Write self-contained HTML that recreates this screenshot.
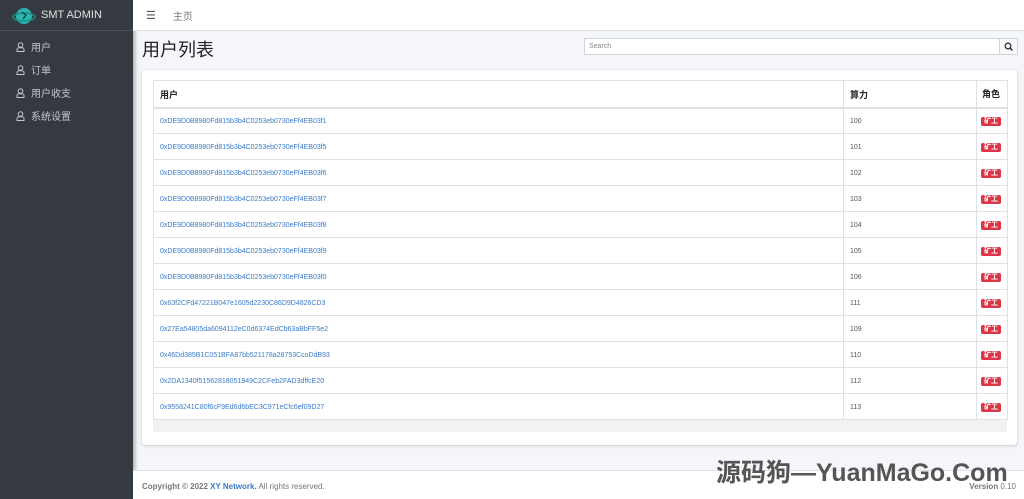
<!DOCTYPE html>
<html><head><meta charset="utf-8"><style>
*{box-sizing:border-box;margin:0;padding:0}
html,body{width:1024px;height:499px;overflow:hidden}
body{font-family:"Liberation Sans","Noto Sans CJK SC",sans-serif;background:#f4f6f9;position:relative}
.sb{position:absolute;left:0;top:0;width:133px;height:499px;background:#343a40;box-shadow:2px 0 4px rgba(0,0,0,.3)}
.brand{height:31px;border-bottom:1px solid #4b545c;display:flex;align-items:center;padding-left:12px;color:#e0e0e0;font-size:11px}
.logo{width:22px;height:18px;margin-right:7px;position:relative}
.nav{padding-top:4px}
.nav div{height:23px;display:flex;align-items:center;padding-left:16px;color:#c2c7d0;font-size:10px}
.nav svg{margin-right:6px}
.hdr{position:absolute;left:133px;top:0;right:0;height:31px;background:#fff;border-bottom:1px solid #dee2e6;font-size:10px;color:#777;display:flex;align-items:center}
h1{position:absolute;left:142px;top:36px;font-size:18px;font-weight:400;color:#222}
.srch{position:absolute;left:584px;top:38px;width:416px;height:17px;border:1px solid #ced4da;background:#fff;font-size:7px;color:#888;padding:4px 4px}
.sbtn{position:absolute;left:999px;top:38px;width:19px;height:17px;border:1px solid #ced4da;background:#f8f9fa}
.card{position:absolute;left:142px;top:70px;width:875px;height:375px;background:#fff;border-radius:3px;box-shadow:0 0 1px rgba(0,0,0,.2),0 1px 3px rgba(0,0,0,.15)}
.tw{position:absolute;left:11px;top:10px;width:854px;height:352px;background:#f2f2f2}
table{border-collapse:collapse;width:854px;background:#fff;table-layout:fixed}
td,th{border:1px solid #dee2e6;font-size:7px;height:26px;padding:2px 6px 0;text-align:left;color:#555;white-space:nowrap;overflow:hidden;vertical-align:middle;line-height:10px}
th{height:27px;font-size:9px;color:#222;font-weight:700;border-bottom:2px solid #dee2e6}
td a{color:#3a7bc8}
.b{background:#dc3545;color:#fff;font-size:7px;padding:1px 3px;border-radius:2px;font-weight:700;white-space:nowrap}
.ft{position:absolute;left:133px;top:470px;right:0;height:29px;background:#fff;border-top:1px solid #dee2e6;font-size:8px;color:#777;padding:11px 9px}
.wm{position:absolute;left:716px;top:458px;font-size:25px;font-weight:700;color:#555;white-space:nowrap;line-height:30px}
</style></head><body>
<div class="sb">
<div class="brand"><div class="logo"><svg width="24" height="20"><circle cx="12" cy="10" r="8" fill="#2bb5b0"/><ellipse cx="12" cy="11" rx="11" ry="4" fill="none" stroke="#1c8f8b" stroke-width="1.5"/><path d="M10 6l4 3-3 4" stroke="#0d4f5a" stroke-width="1.5" fill="none"/></svg></div>SMT ADMIN</div>
<div class="nav">
<div><svg width="9" height="10"><circle cx="4.5" cy="3" r="2.3" fill="none" stroke="#c2c7d0"/><path d="M1 9.5v-2c0-1 1-1.7 2-1.7h3c1 0 2 .7 2 1.7v2z" fill="none" stroke="#c2c7d0"/></svg>用户</div>
<div><svg width="9" height="10"><circle cx="4.5" cy="3" r="2.3" fill="none" stroke="#c2c7d0"/><path d="M1 9.5v-2c0-1 1-1.7 2-1.7h3c1 0 2 .7 2 1.7v2z" fill="none" stroke="#c2c7d0"/></svg>订单</div>
<div><svg width="9" height="10"><circle cx="4.5" cy="3" r="2.3" fill="none" stroke="#c2c7d0"/><path d="M1 9.5v-2c0-1 1-1.7 2-1.7h3c1 0 2 .7 2 1.7v2z" fill="none" stroke="#c2c7d0"/></svg>用户收支</div>
<div><svg width="9" height="10"><circle cx="4.5" cy="3" r="2.3" fill="none" stroke="#c2c7d0"/><path d="M1 9.5v-2c0-1 1-1.7 2-1.7h3c1 0 2 .7 2 1.7v2z" fill="none" stroke="#c2c7d0"/></svg>系统设置</div>
</div></div>
<div class="hdr"><span style="margin-left:13px;font-size:11px;color:#555">☰</span><span style="margin-left:17px">主页</span></div>
<h1>用户列表</h1>
<div class="srch">Search</div>
<div class="sbtn"><svg width="17" height="15"><circle cx="8" cy="7" r="2.8" fill="none" stroke="#333" stroke-width="1.3"/><path d="M10 9l2.5 2.5" stroke="#333" stroke-width="1.5"/></svg></div>
<div class="card"><div class="tw"><table>
<colgroup><col style="width:690px"><col style="width:133px"><col style="width:31px"></colgroup>
<tr><th>用户</th><th>算力</th><th style="padding:0 5px">角色</th></tr>
<tr><td><a>0xDE9D0B8980Fd815b3b4C0253eb0730eFf4EB03f1</a></td><td>100</td><td style="padding:2px 4px 0"><span class="b">矿工</span></td></tr>
<tr><td><a>0xDE9D0B8980Fd815b3b4C0253eb0730eFf4EB03f5</a></td><td>101</td><td style="padding:2px 4px 0"><span class="b">矿工</span></td></tr>
<tr><td><a>0xDE9D0B8980Fd815b3b4C0253eb0730eFf4EB03f6</a></td><td>102</td><td style="padding:2px 4px 0"><span class="b">矿工</span></td></tr>
<tr><td><a>0xDE9D0B8980Fd815b3b4C0253eb0730eFf4EB03f7</a></td><td>103</td><td style="padding:2px 4px 0"><span class="b">矿工</span></td></tr>
<tr><td><a>0xDE9D0B8980Fd815b3b4C0253eb0730eFf4EB03f8</a></td><td>104</td><td style="padding:2px 4px 0"><span class="b">矿工</span></td></tr>
<tr><td><a>0xDE9D0B8980Fd815b3b4C0253eb0730eFf4EB03f9</a></td><td>105</td><td style="padding:2px 4px 0"><span class="b">矿工</span></td></tr>
<tr><td><a>0xDE9D0B8980Fd815b3b4C0253eb0730eFf4EB03f0</a></td><td>106</td><td style="padding:2px 4px 0"><span class="b">矿工</span></td></tr>
<tr><td><a>0x63f2CFd47221B047e1605d2230C86D9D4826CD3</a></td><td>111</td><td style="padding:2px 4px 0"><span class="b">矿工</span></td></tr>
<tr><td><a>0x27Ea54805da6094112eC0d6374EdCb63aBbFF5e2</a></td><td>109</td><td style="padding:2px 4px 0"><span class="b">矿工</span></td></tr>
<tr><td><a>0x46Dd385B1C051BFA87bb521178a28753CcoDdB93</a></td><td>110</td><td style="padding:2px 4px 0"><span class="b">矿工</span></td></tr>
<tr><td><a>0x2DA1340f51562818051949C2CFeb2FAD3dffcE20</a></td><td>112</td><td style="padding:2px 4px 0"><span class="b">矿工</span></td></tr>
<tr><td><a>0x9558241C80f6cF9Ed6d6bEC3C971eCfc6ef09D27</a></td><td>113</td><td style="padding:2px 4px 0"><span class="b">矿工</span></td></tr>
</table></div></div>
<div class="ft"><b>Copyright © 2022 <span style="color:#3a7bc8">XY Network.</span></b> All rights reserved.<span style="position:absolute;right:8px;top:11px"><b>Version</b> 0.10</span></div>
<div class="wm">源码狗—YuanMaGo.Com</div>
</body></html>
